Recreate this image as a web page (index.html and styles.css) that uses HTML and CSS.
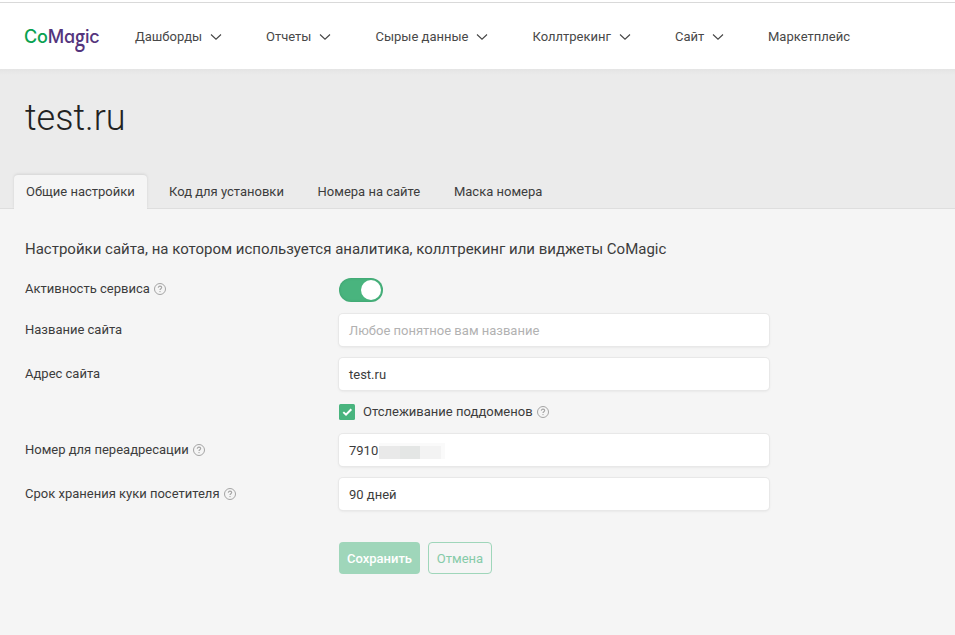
FILE: index.html
```html
<!DOCTYPE html>
<html lang="ru">
<head>
<meta charset="utf-8">
<title>test.ru — CoMagic</title>
<link rel="stylesheet" href="styles.css">
</head>
<body>
<svg class="defs" width="0" height="0" aria-hidden="true">
  <symbol id="chev" viewBox="0 0 12 8"><path d="M1 1.5 6 6.2 11 1.5" fill="none" stroke="#444" stroke-width="1.1"/></symbol>
  <symbol id="help" viewBox="0 0 12 12"><circle cx="6" cy="6" r="5.5" fill="none" stroke="#a4a4a4" stroke-width="1"/><path d="M4.3 4.8C4.3 3.7 5 3.1 6 3.1s1.7.6 1.7 1.5C7.700 5.700 6 5.700 6 7" fill="none" stroke="#a4a4a4" stroke-width="1.1"/><circle cx="6" cy="8.600" r=".7" fill="#a4a4a4"/></symbol>
</svg>
<header class="header">
  <div class="logo"><span class="logo-co">Co</span><span class="logo-magic">Ma<span class="logo-g">g</span>ic</span></div>
  <nav class="nav">
    <a class="n1">Дашборды<svg class="chev"><use href="#chev"/></svg></a>
    <a class="n2">Отчеты<svg class="chev"><use href="#chev"/></svg></a>
    <a class="n3">Сырые данные<svg class="chev"><use href="#chev"/></svg></a>
    <a class="n4">Коллтрекинг<svg class="chev"><use href="#chev"/></svg></a>
    <a class="n5">Сайт<svg class="chev"><use href="#chev"/></svg></a>
    <a>Маркетплейс</a>
  </nav>
</header>
<section class="hero">
  <h1>test.ru</h1>
  <div class="tabs">
    <a class="tab active">Общие настройки</a>
    <a class="tab">Код для установки</a>
    <a class="tab">Номера на сайте</a>
    <a class="tab">Маска номера</a>
  </div>
</section>
<main class="content">
  <h2>Настройки сайта, на котором используется аналитика, коллтрекинг или виджеты CoMagic</h2>
  <div class="row row-toggle"><div class="label">Активность сервиса<svg class="help"><use href="#help"/></svg></div><div class="toggle"><i></i></div></div>
  <div class="row"><div class="label">Название сайта</div><div class="input placeholder">Любое понятное вам название</div></div>
  <div class="row"><div class="label">Адрес сайта</div><div class="input">test.ru</div></div>
  <div class="row row-check"><div></div><div class="check"><svg class="box" viewBox="0 0 16 16"><rect width="16" height="16" rx="1.500" fill="#49b47e"/><path d="M4.300 8.100 7 10.700 12.300 5.300" fill="none" stroke="#fff" stroke-width="2"/></svg><span>Отслеживание поддоменов</span><svg class="help"><use href="#help"/></svg></div></div>
  <div class="row"><div class="label">Номер для переадресации<svg class="help"><use href="#help"/></svg></div><div class="input">7910<span class="mask"><i></i><i></i><i></i></span></div></div>
  <div class="row"><div class="label">Срок хранения куки посетителя<svg class="help"><use href="#help"/></svg></div><div class="input">90 дней</div></div>
  <div class="actions"><a class="btn save">Сохранить</a><a class="btn cancel">Отмена</a></div>
</main>
</body>
</html>
```
FILE: styles.css
```css
* { box-sizing: border-box; }
body {
  margin: 0;
  height: 635px;
  overflow: hidden;
  display: flex;
  flex-direction: column;
  background: #f5f5f5;
  color: #3c3c3c;
  font: 13px/16px Roboto, sans-serif;
}
.defs { position: absolute; }
.header {
  flex: none;
  height: 69px;
  padding: 4px 0 0 24px;
  display: flex;
  align-items: center;
  background: linear-gradient(#fff 2px, #d9d9d9 2px, #d9d9d9 3px, #fff 3px);
}
.logo {
  width: 111px;
  font: 500 18px/24px Inter, sans-serif;
  font-feature-settings: "cv11";
  letter-spacing: -.15px;
  white-space: nowrap;
}
.logo-co { color: #0aa150; }
.logo-magic { color: #54357d; }
.logo-g {
  display: inline-block;
  font: 600 18px/24px "Open Sans", sans-serif;
  transform: scaleY(1.25);
  transform-origin: 0 9px;
}
.nav { display: flex; color: #484848; white-space: nowrap; }
.nav a { display: flex; align-items: center; justify-content: space-between; }
.n1 { width: 87px; margin-right: 44px; }
.n2 { width: 65px; margin-right: 44.500px; }
.n3 { width: 112px; margin-right: 45px; }
.n4 { width: 98px; margin-right: 44.500px; }
.n5 { width: 49px; margin-right: 44px; }
.chev { width: 12px; height: 8px; }
.hero {
  flex: none;
  height: 140px;
  display: flex;
  flex-direction: column;
  justify-content: space-between;
  background: linear-gradient(#e4e4e4, #ebebeb 6px);
  box-shadow: inset 0 -1px #dedede;
}
h1 {
  margin: 28px 0 0 25px;
  font-size: 36px;
  line-height: 42px;
  font-weight: 300;
  color: #222;
}
.tabs { display: flex; padding-left: 14px; }
.tab { height: 34px; padding: 9px 12px 0; margin-right: 9.700px; white-space: nowrap; }
.tab.active {
  width: 133px;
  margin-right: 10px;
  background: #f5f5f5;
  border-radius: 4px 4px 0 0;
  box-shadow: 0 -1px 3px rgba(0, 0, 0, .1);
  clip-path: inset(-4px -4px 0 -4px);
}
.content { padding: 30px 25px 0; }
h2 { margin: 0 0 19px; font-size: 15px; line-height: 20px; font-weight: 400; white-space: nowrap; }
.row { display: grid; grid-template-columns: 314px 430px; margin-bottom: 12px; height: 32px; align-items: center; }
.row-toggle { height: 24px; }
.row-check { height: 16px; margin: 14px 0; }
.label { display: flex; align-items: center; white-space: nowrap; }
.row-toggle .label { margin-top: -2px; }
.help { width: 12px; height: 12px; margin-left: 4px; flex: none; }
.toggle {
  width: 44px;
  height: 24px;
  border-radius: 12px;
  padding: 2px;
  background: #49b47e;
  box-shadow: inset 0 0 2px 1px rgba(0, 80, 40, .12);
  display: flex;
  justify-content: flex-end;
}
.toggle i { width: 20px; height: 20px; border-radius: 50%; background: #fff; }
.input {
  height: 32px;
  display: flex;
  align-items: center;
  padding: 1px 10px 0;
  border-radius: 4px;
  background: #fff;
  box-shadow: 0 0 0 1px #e8e8e8, 0 1px 3px rgba(0, 0, 0, .1);
}
.placeholder { color: #b2b2b2; }
.mask { display: flex; height: 16px; border-top: 3px solid #fafafa; border-right: 4px solid #fafafa; margin-left: 1px; }
.mask i { width: 20.500px; background: #e9e9e9; }
.mask i:nth-child(2) { background: #e4e6e5; }
.mask i:nth-child(3) { background: #f3f3f3; }
.check { display: flex; align-items: center; }
.box { width: 16px; height: 16px; margin-right: 8px; }
.actions { display: flex; gap: 8px; margin: 32px 0 0 314px; }
.btn { height: 32px; border-radius: 4px; display: flex; align-items: center; justify-content: center; padding-top: 1px; }
.save { width: 81px; background: #9fd6ba; color: #fff; font-weight: 500; }
.cancel { width: 64px; border: 1px solid #9fd6ba; color: #86cba8; }
```
